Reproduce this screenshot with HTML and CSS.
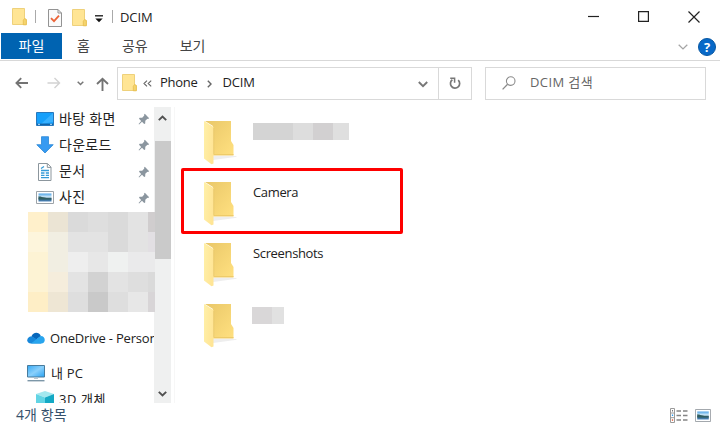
FILE: index.html
```html
<!DOCTYPE html>
<html lang="ko">
<head>
  <meta charset="UTF-8">
  <meta name="viewport" content="width=device-width, initial-scale=1.0">
  <title>DCIM</title>
  <link rel="stylesheet" href="styles.css">
</head>
<body>
  <svg class="sprite" width="0" height="0">
    <defs>
      <linearGradient id="flap" x1="0" y1="0" x2="1" y2="0.3">
        <stop offset="0" stop-color="#fff0a8"/>
        <stop offset="1" stop-color="#ffe596"/>
      </linearGradient>
      <linearGradient id="back" x1="0" y1="0" x2="1" y2="1">
        <stop offset="0" stop-color="#e9c768"/>
        <stop offset="1" stop-color="#ffe080"/>
      </linearGradient>
      <linearGradient id="sky" x1="0" y1="0" x2="0" y2="1">
        <stop offset="0" stop-color="#4da3e8"/>
        <stop offset="0.45" stop-color="#d5ecf8"/>
        <stop offset="0.6" stop-color="#2f5f7c"/>
        <stop offset="1" stop-color="#4e86bd"/>
      </linearGradient>
      <linearGradient id="screen" x1="0" y1="0" x2="1" y2="1">
        <stop offset="0" stop-color="#35a9f5"/>
        <stop offset="0.5" stop-color="#8bd0fb"/>
        <stop offset="1" stop-color="#28a2f2"/>
      </linearGradient>
    </defs>
    <symbol id="folder-small" viewBox="0 0 15 18">
      <path d="M.5.5h12v10.2l1.6.8v5H.5z" fill="#ffe594" stroke="#eed17b"/>
      <path d="M11.3 16.8v-4.5l1.2-1.8 1.9 1v5.3z" fill="#f5d46d" stroke="#e6bd4e" stroke-width=".8"/>
    </symbol>
    <symbol id="folder-large" viewBox="0 0 34 46">
      <path d="M10 36h23l1 .8L10 40z" fill="#eeeeee"/>
      <path d="M2 1h26v20l2.5 4v10H10V6z" fill="url(#back)"/>
      <path d="M10 34h20.5v1.5H10z" fill="#eecb69"/>
      <path d="M1 1 10.5 7v36.5l-2 .8L1 38.5z" fill="url(#flap)"/>
      <path d="M10.8 8v26" stroke="#e6c56b" stroke-width=".7"/>
    </symbol>
    <symbol id="pin" viewBox="0 0 12 12">
      <path d="M6.8.8 11.2 5.2 10 6 9.4 5.7 7.3 7.8 7.2 10.5 6.2 11 4 8.8 1.1 11.4.6 10.9 3.2 8 1 5.8 1.6 4.8 4.2 4.7 6.3 2.6 6 1.8z" fill="#8b969f"/>
    </symbol>
    <symbol id="picture" viewBox="0 0 18 13">
      <path d="M.5.5h17v12H.5z" fill="#fff" stroke="#9da3a8"/>
      <path d="M2.5 2.5h13v8h-13z" fill="url(#sky)"/>
      <path d="M2.5 5.2c3 .2 5 1.7 13 2.3v1h-13z" fill="#315e60"/>
    </symbol>
  </svg>

  <div class="window">
    <header class="title-bar">
      <svg class="title-folder" width="15" height="18"><use href="#folder-small"/></svg>
      <span class="divider"></span>
      <svg class="title-check" width="14" height="18" viewBox="0 0 14 18">
        <path d="M.5.5h9.5l3.5 3.5v13.5H.5z" fill="#fafafa" stroke="#939393"/>
        <path d="M10 .5V4h3.5" fill="none" stroke="#939393"/>
        <path d="m3 9.2 3 3 5-5.5" fill="none" stroke="#eb6337" stroke-width="1.8"/>
      </svg>
      <svg class="title-folder-2" width="15" height="18"><use href="#folder-small"/></svg>
      <svg class="title-more" width="8" height="8" viewBox="0 0 8 8">
        <path d="M0 .8h8" stroke="#222" stroke-width="1.4"/>
        <path d="M.3 3.4h7.4L4 7.2z" fill="#111"/>
      </svg>
      <span class="divider"></span>
      <span class="title">DCIM</span>
      <div class="window-buttons">
        <svg width="11" height="11" viewBox="0 0 11 11"><path d="M0 5.5h11" stroke="#222" stroke-width="1.2"/></svg>
        <svg width="11" height="11" viewBox="0 0 11 11"><path d="M.6.6h9.8v9.8H.6z" fill="none" stroke="#222" stroke-width="1.2"/></svg>
        <svg width="12" height="12" viewBox="0 0 12 12"><path d="m.5.5 11 11m0-11-11 11" stroke="#222" stroke-width="1.2"/></svg>
      </div>
    </header>

    <nav class="tabs">
      <span class="tab tab-active">파일</span>
      <span class="tab tab-home">홈</span>
      <span class="tab tab-share">공유</span>
      <span class="tab tab-view">보기</span>
      <div class="tabs-right">
        <svg width="10" height="6" viewBox="0 0 10 6"><path d="m.7.7 4.3 4.2L9.3.7" fill="none" stroke="#a5a5a5" stroke-width="1.3"/></svg>
        <span class="help">?</span>
      </div>
    </nav>

    <div class="toolbar">
      <div class="arrows">
        <svg width="14" height="12" viewBox="0 0 14 12"><path d="M13 6H1.5M6.2 1.2 1.4 6l4.8 4.8" fill="none" stroke="#737373" stroke-width="1.8"/></svg>
        <svg width="14" height="12" viewBox="0 0 14 12"><path d="M.5 6h12M7.5 1l5 5-5 5" fill="none" stroke="#d2d2d2" stroke-width="1.4"/></svg>
        <svg width="7" height="5" viewBox="0 0 7 5"><path d="m.7.7 2.8 2.8L6.3.7" fill="none" stroke="#777" stroke-width="1.5"/></svg>
        <svg width="13" height="14" viewBox="0 0 13 14"><path d="M6.5 14V1.7M1 7l5.5-5.3L12 7" fill="none" stroke="#737373" stroke-width="1.9"/></svg>
      </div>
      <div class="address">
        <svg width="15" height="18"><use href="#folder-small"/></svg>
        <svg class="crumb-back" width="9" height="7" viewBox="0 0 9 7"><path d="M4 .6 1 3.5l3 2.9M8.2.6l-3 2.9 3 2.9" fill="none" stroke="#666" stroke-width="1.1"/></svg>
        <span class="crumb crumb-phone">Phone</span>
        <svg class="crumb-next" width="5" height="8" viewBox="0 0 5 8"><path d="M.8.8 4 4 .8 7.2" fill="none" stroke="#666" stroke-width="1.4"/></svg>
        <span class="crumb crumb-dcim">DCIM</span>
        <svg class="address-drop" width="10" height="7" viewBox="0 0 10 7"><path d="m.8 1 4.2 4.2L9.2 1" fill="none" stroke="#777" stroke-width="1.9"/></svg>
        <div class="refresh">
          <svg width="12" height="13" viewBox="0 0 12 13">
            <path d="M9.2 3.1A4.6 4.6 0 1 1 3.4 2.7" fill="none" stroke="#777" stroke-width="1.7"/>
            <path d="M1.2 1.2H5.6v4.6" fill="none" stroke="#777" stroke-width="1.5"/>
          </svg>
        </div>
      </div>
      <div class="search">
        <svg width="14" height="14" viewBox="0 0 14 14"><circle cx="8.7" cy="5.1" r="4.3" fill="none" stroke="#8a8a8a" stroke-width="1.1"/><path d="M5.6 8.3.6 13.4" stroke="#8a8a8a" stroke-width="1.3"/></svg>
        <span class="search-text">DCIM 검색</span>
      </div>
    </div>

    <main class="content">
      <aside class="sidebar">
        <div class="quick-item">
          <svg width="18" height="14" viewBox="0 0 18 14"><path d="M.5.5h17v13H.5z" fill="#16a0fb" stroke="#2878bc"/><path d="M17 1v9L5 12z" fill="#38b1ff"/><path d="M1 12.3h16" stroke="#1465a8" stroke-width="1.4"/><path d="M2 12.3h2m10 0h2" stroke="#b7e1ff"/></svg>
          <span class="quick-name">바탕 화면</span>
          <svg class="pin" width="12" height="12"><use href="#pin"/></svg>
        </div>
        <div class="quick-item">
          <svg width="18" height="18" viewBox="0 0 18 18"><path d="M5.5.7h7v8h4.7L9 17 .8 8.7h4.7z" fill="#369af1" stroke="#2886d6" stroke-width=".8"/></svg>
          <span class="quick-name">다운로드</span>
          <svg class="pin" width="12" height="12"><use href="#pin"/></svg>
        </div>
        <div class="quick-item">
          <svg width="18" height="18" viewBox="0 0 18 18"><path d="M2.5.5h9l3.5 3.6v13.4H2.5z" fill="#fff" stroke="#8c969d"/><path d="M11.3.8v3.6H15" fill="none" stroke="#8c969d"/><path d="M5 5.5 8 3.5M5 7.5h8M5 10h3.5M5 12.3h3.5M5 14.7h8M9.8 10H13M9.8 12.3H13" stroke="#359bd7" stroke-width="1.3"/></svg>
          <span class="quick-name">문서</span>
          <svg class="pin" width="12" height="12"><use href="#pin"/></svg>
        </div>
        <div class="quick-item">
          <svg width="18" height="13"><use href="#picture"/></svg>
          <span class="quick-name">사진</span>
          <svg class="pin" width="12" height="12"><use href="#pin"/></svg>
        </div>
        <div class="mosaic">
          <i class="c1"></i><i class="c2"></i><i class="c5"></i><i class="c6"></i><i class="c5"></i><i class="c7"></i><i class="c4"></i>
          <i class="c8"></i><i class="c9"></i><i class="c7"></i><i class="c7"></i><i class="c5"></i><i class="c7"></i><i class="c16"></i>
          <i class="c10"></i><i class="c9"></i><i class="c12"></i><i class="c13"></i><i class="c14"></i><i class="c15"></i><i class="c15"></i>
          <i class="c10"></i><i class="c11"></i><i class="c7"></i><i class="c3"></i><i class="c7"></i><i class="c6"></i><i class="c5"></i>
          <i class="c17"></i><i class="c18"></i><i class="c6"></i><i class="c19"></i><i class="c6"></i><i class="c13"></i><i class="c20"></i>
        </div>
        <div class="tree-item tree-onedrive">
          <svg width="18" height="12" viewBox="0 0 18 12"><path d="M4.5 4.2C6-.2 12-.8 13.8 4L9 8z" fill="#0767bb"/><path d="M4 11.5c-5 0-5-6.8.4-7.3L15 10l-1 1.5z" fill="#1787da"/><path d="M4 11.5 13.5 4.1c5.3-.3 5.8 7.4.6 7.4z" fill="#28a5ee"/></svg>
          <span class="tree-name name-onedrive">OneDrive - Person</span>
        </div>
        <div class="tree-item tree-pc">
          <svg width="18" height="17" viewBox="0 0 18 17"><path d="M.5.5h17v11.5H.5z" fill="url(#screen)" stroke="#487b9c"/><path d="M7 12.5h4v1.5H7z" fill="#b9c6cf"/><path d="M.5 15.7h17" stroke="#7d97a8" stroke-width="1.4"/></svg>
          <span class="tree-name name-pc">내 PC</span>
        </div>
        <div class="tree-item tree-3d">
          <svg width="18" height="18" viewBox="0 0 18 18"><path d="M9 0l9 3-9 3.5L0 3z" fill="#a3e8ef"/><path d="M0 3l9 3.5V18l-9-3.5z" fill="#62d4e4"/><path d="M18 3 9 6.5V18l9-3.5z" fill="#14a9c5"/></svg>
          <span class="tree-name name-3d">3D 개체</span>
        </div>
      </aside>
      <div class="scrollbar">
        <svg width="9" height="6" viewBox="0 0 9 6"><path d="M.8 5.2 4.5 1.5l3.7 3.7" fill="none" stroke="#505050" stroke-width="1.9"/></svg>
        <div class="thumb"></div>
        <svg class="scroll-down" width="9" height="6" viewBox="0 0 9 6"><path d="M.8.8 4.5 4.5 8.2.8" fill="none" stroke="#505050" stroke-width="1.9"/></svg>
      </div>
      <div class="splitter"></div>
      <section class="files">
        <div class="file">
          <svg width="34" height="46"><use href="#folder-large"/></svg>
          <div class="masked">
            <i class="m1"></i><i class="m1"></i><i class="m2"></i><i class="m3"></i><i class="m4"></i>
          </div>
        </div>
        <div class="file selected">
          <svg width="34" height="46"><use href="#folder-large"/></svg>
          <span class="file-name">Camera</span>
        </div>
        <div class="file">
          <svg width="34" height="46"><use href="#folder-large"/></svg>
          <span class="file-name">Screenshots</span>
        </div>
        <div class="file">
          <svg width="34" height="46"><use href="#folder-large"/></svg>
          <div class="masked masked-short">
            <i class="m5"></i><i class="m6"></i>
          </div>
        </div>
      </section>
    </main>

    <footer class="status-bar">
      <span class="status-text">4개 항목</span>
      <div class="view-buttons">
        <svg width="18" height="15" viewBox="0 0 18 15"><path d="M.5.5h4v14h-4zM.5 5h4M.5 9.7h4" fill="#fff" stroke="#9a9a9a"/><path d="M2.5 2v1.5" stroke="#777"/><path d="M2.5 6.5V8" stroke="#2c9cf0" stroke-width="1.3"/><path d="M2.5 11.3v1.5" stroke="#e65a36" stroke-width="1.3"/><path d="M6.5 3H11m2 0h4.5M6.5 7.5H11m2 0h4.5M6.5 12H11m2 0h4.5" stroke="#858585" stroke-width="1.3"/></svg>
        <svg width="16" height="13" viewBox="0 0 18 13" preserveAspectRatio="none"><use href="#picture"/></svg>
      </div>
    </footer>
  </div>
</body>
</html>
```

FILE: styles.css
```css
* {
  box-sizing: border-box;
  margin: 0;
  padding: 0;
}
body {
  width: 720px;
  height: 429px;
  overflow: hidden;
  background-color: #fff;
  color: #222;
  font-family: "Open Sans", "Noto Sans CJK KR", sans-serif;
  font-size: 13px;
  line-height: 18px;
}
svg {
  display: block;
  flex: none;
}
span {
  white-space: nowrap;
}
.sprite {
  position: absolute;
}
.window {
  display: flex;
  flex-direction: column;
  height: 429px;
}

/* title bar */
.title-bar {
  display: flex;
  align-items: center;
  height: 33px;
  padding-left: 12px;
}
.divider {
  width: 1px;
  height: 13px;
  background-color: #aaa;
}
.title-folder {
  margin-right: 8px;
}
.title-check {
  margin: 2px 10px 0 12px;
}
.title-folder-2 {
  margin: 2px 8px 0 0;
}
.title-more {
  margin: 4px 9px 0 0;
}
.title {
  margin-left: 7px;
  letter-spacing: -0.1px;
}
.window-buttons {
  display: flex;
  align-items: center;
  gap: 39px;
  margin-left: auto;
  padding-right: 20px;
}

/* ribbon tabs */
.tabs {
  display: flex;
  height: 28px;
  border-bottom: 1px solid #d8d8d8;
  color: #444;
  padding-left: 1px;
}
.tab {
  height: 26px;
  font-size: 14px;
  line-height: 25px;
}
.tab-active {
  width: 61px;
  background-color: #0063b1;
  color: #fff;
  text-align: center;
}
.tab-home {
  margin-left: 15px;
}
.tab-share {
  margin-left: 32px;
}
.tab-view {
  margin-left: 32px;
}
.tabs-right {
  display: flex;
  align-items: center;
  gap: 10px;
  margin-left: auto;
  padding-right: 4px;
}
.help {
  width: 18px;
  height: 18px;
  border: 1px solid #0757a2;
  border-radius: 50%;
  background-color: #0869c8;
  color: #fff;
  font-size: 13px;
  font-weight: bold;
  line-height: 16px;
  text-align: center;
}

/* address and search */
.toolbar {
  display: flex;
  align-items: center;
  height: 46px;
  padding: 0 14px 2px 15px;
}
.arrows {
  display: flex;
  align-items: center;
  width: 102px;
}
.arrows svg:nth-child(2) {
  margin-left: 18px;
}
.arrows svg:nth-child(3) {
  margin-left: 16px;
}
.arrows svg:nth-child(4) {
  margin: 2px 0 0 12px;
}
.address,
.search {
  display: flex;
  align-items: center;
  height: 33px;
  border: 1px solid #d9d9d9;
}
.address {
  width: 355px;
  padding-left: 4px;
}
.crumb-back {
  margin-left: 6px;
}
.crumb {
  margin-bottom: 2px;
}
.crumb-phone {
  margin-left: 8px;
  letter-spacing: -0.3px;
}
.crumb-next {
  margin: 2px 10px 0;
}
.crumb-dcim {
  letter-spacing: -0.1px;
}
.address-drop {
  margin: 2px 10px 0 auto;
}
.refresh {
  display: flex;
  align-items: center;
  justify-content: center;
  width: 33px;
  height: 31px;
  border-left: 1px solid #d9d9d9;
}
.search {
  width: 221px;
  margin-left: 13px;
  padding-left: 16px;
}
.search-text {
  margin: 0 0 2px 14px;
  color: #666;
  letter-spacing: 0.4px;
}

/* navigation pane */
.content {
  display: flex;
  height: 296px;
}
.sidebar {
  width: 154px;
  height: 295px;
  padding-left: 28px;
}
.quick-item {
  display: flex;
  align-items: center;
  height: 26.25px;
  padding: 0 4px 2px 8px;
}
.quick-name {
  margin: 0 0 1px 5px;
  font-size: 14px;
  letter-spacing: 0.3px;
}
.pin {
  margin-left: auto;
}
.mosaic {
  display: grid;
  grid-template-columns: repeat(6, 20px) 7px;
  grid-auto-rows: 20px;
  position: relative;
  z-index: 1;
  width: 127px;
}
.c1 { background-color: #fff0cb; }
.c2 { background-color: #ebe4d4; }
.c3 { background-color: #d2d2d2; }
.c4 { background-color: #d0cdce; }
.c5 { background-color: #dadada; }
.c6 { background-color: #dedede; }
.c7 { background-color: #e3e3e3; }
.c8 { background-color: #fdf5dc; }
.c9 { background-color: #f1eee2; }
.c10 { background-color: #fdf3d4; }
.c11 { background-color: #f5eddc; }
.c12 { background-color: #eeeeee; }
.c13 { background-color: #e7e7e7; }
.c14 { background-color: #eff1f0; }
.c15 { background-color: #eaeaeb; }
.c16 { background-color: #e2dfe3; }
.c17 { background-color: #feeec6; }
.c18 { background-color: #eee6d4; }
.c19 { background-color: #c9c9c9; }
.c20 { background-color: #d8d5d7; }
.tree-item {
  display: flex;
  align-items: center;
  height: 26px;
  margin-left: -1px;
  width: 127px;
  overflow: hidden;
}
.tree-name {
  margin-left: 5px;
}
.name-onedrive {
  letter-spacing: -0.2px;
}
.name-pc {
  margin: 0 0 1px 6px;
  letter-spacing: 0.2px;
}
.tree-onedrive {
  margin-top: 13px;
}
.tree-pc {
  margin-top: 9px;
}
.tree-3d {
  align-items: flex-start;
  height: 12px;
  margin-top: 5px;
  padding-left: 9px;
}
.name-3d {
  margin-top: -1px;
  letter-spacing: 0.6px;
}
.scrollbar {
  display: flex;
  flex-direction: column;
  align-items: center;
  width: 17px;
  height: 296px;
  padding-top: 8px;
  background-color: #eff0f0;
}
.thumb {
  width: 16px;
  height: 118px;
  margin-top: 20px;
  background-color: #cacaca;
}
.scroll-down {
  margin: auto 0 6px;
}
.splitter {
  width: 4px;
  border-right: 1px solid #f7f7f7;
}

/* file list */
.files {
  display: flex;
  flex-direction: column;
  padding: 13px 0 0 28px;
}
.file {
  display: flex;
  position: relative;
  width: 200px;
  height: 61px;
}
.selected::after {
  content: "";
  box-sizing: border-box;
  position: absolute;
  top: -13px;
  left: -22px;
  width: 222px;
  height: 66px;
  border: 3px solid #fe0000;
  border-radius: 2px;
}
.file-name {
  margin: 2px 0 0 16px;
  letter-spacing: -0.35px;
}
.masked {
  display: grid;
  grid-template-columns: repeat(4, 20px) 16px;
  grid-auto-rows: 17px;
  margin: 3px 0 0 16px;
}
.masked-short {
  grid-template-columns: 20px 12px;
  margin: 4px 0 0 15px;
}
.m1 { background-color: #d4d4d4; }
.m2 { background-color: #dddddd; }
.m3 { background-color: #d2d0d1; }
.m4 { background-color: #dfdfdf; }
.m5 { background-color: #d9d7d8; }
.m6 { background-color: #e1e1e1; }

/* status bar */
.status-bar {
  display: flex;
  align-items: center;
  height: 26px;
  padding: 0 9px 2px 16px;
}
.status-text {
  color: #35506b;
  font-size: 14px;
  letter-spacing: 0.1px;
}
.view-buttons {
  display: flex;
  align-items: center;
  gap: 7px;
  margin-left: auto;
}
```
